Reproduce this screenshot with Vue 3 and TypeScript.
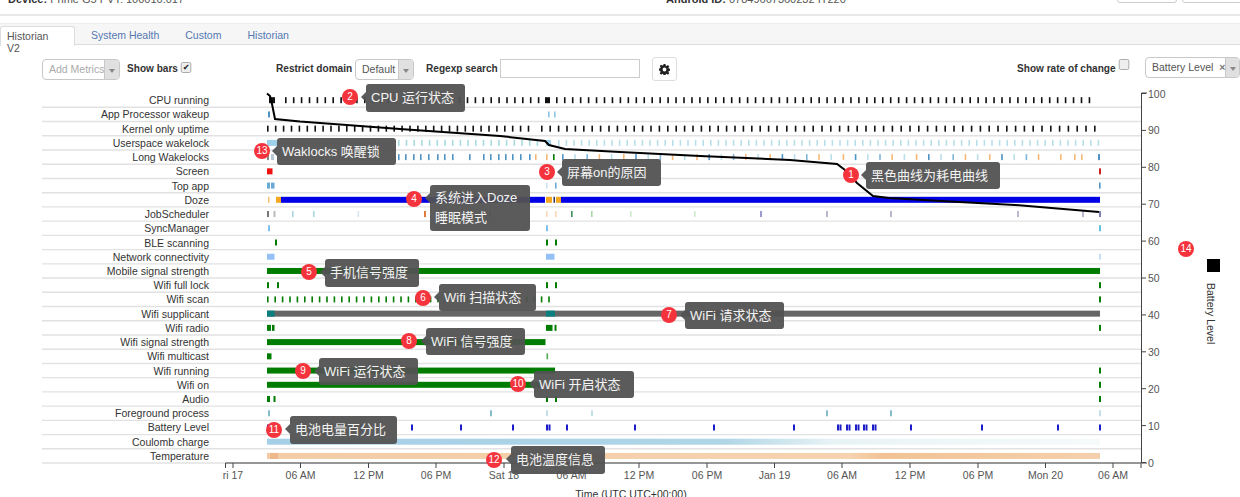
<script setup lang="ts">
interface Bar {
  x: number;
  w: number;
  c: string;
}

interface Row {
  label: string;
  h: number;
  bars: Bar[];
}

interface Note {
  n: number;
  cx: number;
  cy: number;
  x: number;
  y: number;
  w: number;
  h: number;
  lines: string[];
}

const BLACK = "#111111";
const GREEN = "#007d00";
const BLUE = "#0000e6";
const NAVY = "#1c1cc8";
const LBLUE = "#b9dfea";
const MBLUE = "#4f93c4";
const ORANGE = "#f5b878";

// chart coordinates are page coordinates, svg starts at y=84
const CHART_TOP = 84;
const ROW_TOP = 100.2;
const ROW_STEP = 14.23;

function bar(x: number, x2: number, c: string): Bar {
  return { x, w: x2 - x, c };
}

function at(xs: number[], c: string, w = 1.6): Bar[] {
  return xs.map((x) => ({ x, w, c }));
}

function every(from: number, to: number, step: number, c: string, w = 1.6): Bar[] {
  const out: Bar[] = [];
  for (let x = from; x <= to; x += step) out.push({ x, w, c });
  return out;
}

const longColors = [MBLUE, LBLUE, "#7fb6d8", ORANGE, LBLUE, ORANGE];
const longWake: Bar[] = [
  bar(267, 269, "#888888"),
  bar(271, 274, "#b9c9d6"),
  ...at([398, 405, 413, 420, 428, 437, 444, 452, 469, 483, 490, 498, 505, 512, 520, 529], MBLUE),
  ...at([535, 546], ORANGE),
  ...at([553], GREEN),
  ...every(562, 1050, 12.2, "").map((b, i) => ({ ...b, c: longColors[i % 6] })),
  ...at([1060, 1074, 1081], ORANGE),
  bar(1098, 1100, MBLUE),
];

const rows: Row[] = [
  {
    label: "CPU running",
    h: 6,
    bars: [bar(269, 275, BLACK), ...every(285, 540, 7.9, BLACK), bar(545, 550, BLACK), ...every(556, 1094, 7.95, BLACK)],
  },
  {
    label: "App Processor wakeup",
    h: 6,
    bars: at([268], MBLUE, 2).concat(at([548, 554], "#8cc4e4")),
  },
  {
    label: "Kernel only uptime",
    h: 6,
    bars: [...every(267, 530, 7.9, BLACK), ...every(541, 780, 8.4, BLACK), ...every(786, 1094, 8.8, BLACK)],
  },
  {
    label: "Userspace wakelock",
    h: 6,
    bars: [bar(267, 277, "#9fd0ea"), ...every(398, 540, 7.7, "#a6dbe0"), bar(546, 551, "#9fd0ea"), ...every(558, 1098, 7.6, LBLUE)],
  },
  { label: "Long Wakelocks", h: 6, bars: longWake },
  { label: "Screen", h: 6, bars: [bar(267, 272.5, "#ee1111"), bar(1099, 1101, "#cc2222")] },
  {
    label: "Top app",
    h: 6,
    bars: [bar(267, 270, "#6aa9d6"), bar(271, 274.5, "#6aa9d6"), ...at([546], "#cfe2f0"), ...at([555], "#6aa9d6"), ...at([1099], MBLUE)],
  },
  {
    label: "Doze",
    h: 6,
    bars: [
      bar(268, 269.5, "#f5c070"),
      bar(276, 281, "#f5a623"),
      bar(281, 545, BLUE),
      bar(546, 552, "#f5a623"),
      bar(553.5, 555, "#333366"),
      bar(556, 561, "#f5a623"),
      bar(561, 1100, BLUE),
    ],
  },
  {
    label: "JobScheduler",
    h: 6,
    bars: [
      ...at([267], "#777777", 2),
      ...at([273.5], "#bbbbbb", 2),
      ...at([292, 313], "#a9d4e2"),
      ...at([357.5], "#d9e6ee"),
      ...at([424], "#e07a3a", 2),
      ...at([489], "#a08a70"),
      ...at([546, 555], "#f8d8b8"),
      ...at([571], "#3b8f5b"),
      ...at([591], "#a8d8a8"),
      ...at([630, 694], "#cdeacd"),
      ...at([760], "#9a9ad0", 2),
      ...at([826, 890, 1017, 1082], "#b8b8d0", 2),
      ...at([1099], "#8080b0", 2),
    ],
  },
  { label: "SyncManager", h: 6, bars: at([268, 546], "#7cc0ee", 2).concat(at([1099], "#5cc0e0", 2)) },
  { label: "BLE scanning", h: 6, bars: at([275, 546, 555], GREEN, 2) },
  {
    label: "Network connectivity",
    h: 6,
    bars: [bar(267, 274.5, "#94c0f5"), bar(546, 554.5, "#94c0f5"), bar(1099, 1101, "#c8e0f5")],
  },
  { label: "Mobile signal strength", h: 6, bars: [bar(267, 1100, GREEN)] },
  { label: "Wifi full lock", h: 6, bars: at([267, 277, 546, 555, 1099], GREEN, 2) },
  { label: "Wifi scan", h: 6, bars: [...every(267, 555, 7.4, GREEN), ...at([1099], GREEN, 2)] },
  {
    label: "Wifi supplicant",
    h: 6,
    bars: [bar(267, 1100, "#666666"), bar(267, 274.5, "#0b7f80"), bar(546, 555, "#0b7f80")],
  },
  {
    label: "Wifi radio",
    h: 6,
    bars: [bar(267, 271, GREEN), bar(272, 274.5, GREEN), bar(546, 552.5, GREEN), ...at([554.5, 1099], GREEN, 2)],
  },
  { label: "Wifi signal strength", h: 6, bars: [bar(267, 545.5, GREEN)] },
  { label: "Wifi multicast", h: 6, bars: [bar(267, 271.5, GREEN), ...at([546.5], "#55aa55")] },
  { label: "Wifi running", h: 6, bars: [bar(267, 555, GREEN), ...at([1099], GREEN, 2)] },
  { label: "Wifi on", h: 6, bars: [bar(267, 540, GREEN), ...at([1099], GREEN, 2)] },
  { label: "Audio", h: 6, bars: [bar(267, 270, GREEN), ...at([273.5, 546, 555, 1099], GREEN, 2)] },
  { label: "Foreground process", h: 6, bars: at([268, 490, 826, 890], "#88bccc", 2).concat(at([546, 591, 1099], "#c4dfe6", 2)) },
  {
    label: "Battery Level",
    h: 6,
    bars: at(
      [267, 360, 411, 460, 512, 546, 548.5, 566, 634, 713, 793, 837, 839.5, 846, 848.5, 855, 857.5, 863, 865.5, 872, 874.5, 910, 981, 1057, 1099],
      NAVY,
      2,
    ),
  },
  { label: "Coulomb charge", h: 6, bars: [] },
  { label: "Temperature", h: 6, bars: [] },
];

const rowY = (i: number) => ROW_TOP + i * ROW_STEP;

const xTicks = [
  { x: 233, t: "ri 17" },
  { x: 300.5, t: "06 AM" },
  { x: 368.5, t: "12 PM" },
  { x: 436, t: "06 PM" },
  { x: 504, t: "Sat 18" },
  { x: 571.5, t: "06 AM" },
  { x: 639, t: "12 PM" },
  { x: 707, t: "06 PM" },
  { x: 774.5, t: "Jan 19" },
  { x: 842, t: "06 AM" },
  { x: 910, t: "12 PM" },
  { x: 978, t: "06 PM" },
  { x: 1045.5, t: "Mon 20" },
  { x: 1113, t: "06 AM" },
];

const yTicks = [100, 90, 80, 70, 60, 50, 40, 30, 20, 10, 0].map((v) => ({
  v,
  y: 462.5 - v * 3.69,
}));

const batteryLine =
  "267,93.5 270,96 272,104 275,119 300,121.5 400,129 500,136 545,141 549,145 565,149 620,152 700,156 790,160 837,164 845,170 857,183 873,196 889,198 950,201.5 1015,205 1099,212";

const notes: Note[] = [
  { n: 2, cx: 350, cy: 97, x: 366, y: 84, w: 99, h: 28, lines: ["CPU 运行状态"] },
  { n: 13, cx: 262, cy: 151, x: 277, y: 138, w: 119, h: 27, lines: ["Waklocks 唤醒锁"] },
  { n: 3, cx: 547, cy: 172, x: 562, y: 159, w: 99, h: 27, lines: ["屏幕on的原因"] },
  { n: 1, cx: 851, cy: 175, x: 866, y: 162, w: 134, h: 27, lines: ["黑色曲线为耗电曲线"] },
  { n: 4, cx: 414, cy: 199, x: 430, y: 185, w: 100, h: 46, lines: ["系统进入Doze", "睡眠模式"] },
  { n: 5, cx: 309, cy: 272, x: 325, y: 259, w: 94, h: 28, lines: ["手机信号强度"] },
  { n: 6, cx: 423, cy: 298, x: 439, y: 284, w: 97, h: 27, lines: ["Wifi 扫描状态"] },
  { n: 7, cx: 669, cy: 315, x: 685, y: 302, w: 99, h: 27, lines: ["WiFi 请求状态"] },
  { n: 8, cx: 409, cy: 341, x: 426, y: 328, w: 99, h: 27, lines: ["WiFi 信号强度"] },
  { n: 9, cx: 303, cy: 371, x: 319, y: 358, w: 99, h: 27, lines: ["WiFi 运行状态"] },
  { n: 10, cx: 518, cy: 384, x: 534, y: 371, w: 100, h: 27, lines: ["WiFi 开启状态"] },
  { n: 11, cx: 274, cy: 430, x: 290, y: 416, w: 107, h: 28, lines: ["电池电量百分比"] },
  { n: 12, cx: 494, cy: 460, x: 511, y: 446, w: 94, h: 28, lines: ["电池温度信息"] },
];

const tabs = ["Historian V2", "System Health", "Custom", "Historian"];
</script>

<template>
  <div class="page">
    <div class="device">
      <span class="device-item"><b>Device:</b> Prime G5 PVT: 100010.017</span>
      <span class="device-item android"><b>Android ID:</b> 07849667360232 IT220</span>
      <span class="top-btns"><i></i><i></i></span>
    </div>

    <ul class="tabs">
      <li v-for="(t, i) in tabs" :key="t" :class="{ active: i === 0 }">{{ t }}</li>
    </ul>

    <div class="controls">
      <div class="select disabled metrics">
        <span class="select-text">Add Metrics</span>
        <span class="select-arrow"></span>
      </div>
      <label class="check bars">Show bars <span class="box checked">✔</span></label>
      <label class="check domain">Restrict domain</label>
      <div class="select default">
        <span class="select-text">Default</span>
        <span class="select-arrow"></span>
      </div>
      <label class="check regexp">Regexp search</label>
      <input class="search" type="text" />
      <button class="gear" type="button">
        <svg width="11" height="11" viewBox="0 0 16 16">
          <path
            fill="#222"
            fill-rule="evenodd"
            d="M6.6 0h2.8l.4 2.2 1.3.6 1.9-1.3 2 2-1.3 1.9.6 1.3 2.2.4v2.8l-2.2.4-.6 1.3 1.3 1.9-2 2-1.9-1.3-1.3.6-.4 2.2H6.6l-.4-2.2-1.3-.6-1.9 1.3-2-2 1.3-1.9-.6-1.3L-.5 9.4V6.6l2.2-.4.6-1.3-1.3-1.9 2-2 1.9 1.3 1.3-.6zM8 5.2a2.8 2.8 0 1 0 0 5.6 2.8 2.8 0 0 0 0-5.6z"
          />
        </svg>
      </button>
      <label class="check rate">Show rate of change <span class="box"></span></label>
      <div class="select level">
        <span class="select-text">Battery Level <em>×</em></span>
        <span class="select-arrow"></span>
      </div>
    </div>

    <div class="chart">
      <svg class="plot" width="1240" height="413" :viewBox="`0 ${CHART_TOP} 1240 413`">
        <defs>
          <linearGradient id="coulomb" x1="0" x2="1" y1="0" y2="0">
            <stop offset="0" stop-color="#a5cfe8" />
            <stop offset="0.55" stop-color="#b0d6e6" />
            <stop offset="0.68" stop-color="#e8f3f6" />
            <stop offset="1" stop-color="#f6fafb" />
          </linearGradient>
          <linearGradient id="temp" x1="0" x2="1" y1="0" y2="0">
            <stop offset="0" stop-color="#f3cca6" />
            <stop offset="0.7" stop-color="#f6d2ae" />
            <stop offset="0.74" stop-color="#f2c294" />
            <stop offset="1" stop-color="#f5d0ac" />
          </linearGradient>
        </defs>

        <g v-for="(row, i) in rows" :key="row.label">
          <text class="row-label" x="209" :y="rowY(i) + 4" text-anchor="end">{{ row.label }}</text>
          <line class="grid" x1="42" x2="1141" :y1="rowY(i) + 7.1" :y2="rowY(i) + 7.1" />
          <rect
            v-for="(b, j) in row.bars"
            :key="j"
            :x="b.x"
            :y="rowY(i) - row.h / 2"
            :width="b.w"
            :height="row.h"
            :fill="b.c"
          />
        </g>

        <rect x="267" :y="rowY(24) - 3" width="833" height="6" fill="url(#coulomb)" />
        <rect x="267" :y="rowY(25) - 3" width="833" height="6" fill="url(#temp)" />
        <rect x="270" :y="rowY(25) - 3" width="8" height="6" fill="#eeb78c" />

        <polyline class="battery" :points="batteryLine" />

        <!-- x axis -->
        <path class="axis" d="M225.5 468V463H1141V468" />
        <g v-for="t in xTicks" :key="t.x + t.t">
          <line class="axis" :x1="t.x" :x2="t.x" y1="463" y2="468" />
          <text class="tick-label" :x="t.x" y="479" text-anchor="middle">{{ t.t }}</text>
        </g>
        <text class="tick-label axis-title" x="631" y="498" text-anchor="middle">Time (UTC UTC+00:00)</text>

        <!-- y axis -->
        <path class="axis" d="M1147 93H1141.5V463H1147" />
        <g v-for="t in yTicks" :key="t.v">
          <line class="axis" x1="1141" x2="1146" :y1="t.y" :y2="t.y" />
          <text class="tick-label" x="1148" :y="t.y + 4">{{ t.v }}</text>
        </g>

        <!-- legend -->
        <rect x="1207" y="259" width="13" height="13" fill="#000" />
        <text class="tick-label legend" transform="translate(1207 283) rotate(90)">Battery Level</text>
      </svg>

      <template v-for="note in notes" :key="note.n">
        <div
          class="note"
          :style="{ left: note.x + 'px', top: note.y - CHART_TOP + 'px', width: note.w + 'px', height: note.h + 'px' }"
        >
          <span v-for="line in note.lines" :key="line">{{ line }}</span>
        </div>
        <span class="dot" :style="{ left: note.cx - 8 + 'px', top: note.cy - 8 - CHART_TOP + 'px' }">{{ note.n }}</span>
      </template>
      <span class="dot" :style="{ left: '1178px', top: 241 - CHART_TOP + 'px' }">14</span>
    </div>
  </div>
</template>

<style scoped>
.page {
  width: 1240px;
  height: 497px;
  overflow: hidden;
  display: flex;
  flex-direction: column;
  background: #fff;
  font-family: "Liberation Sans", "Noto Sans CJK SC", sans-serif;
  font-size: 11px;
  color: #333;
}

.device {
  flex: none;
  height: 15px;
  position: relative;
  overflow: hidden;
  border-bottom: 2px solid #e8e8e8;
  box-sizing: border-box;
  height: 16px;
}

.device-item {
  position: absolute;
  top: -7px;
  left: 8px;
  font-size: 11px;
  color: #555;
  white-space: nowrap;
}

.device-item b {
  color: #333;
}

.android {
  left: 666px;
}

.top-btns i {
  position: absolute;
  top: -8px;
  width: 58px;
  height: 9px;
  border: 1px solid #ccc;
  border-radius: 3px;
}

.top-btns i:first-child {
  left: 1117px;
}

.top-btns i:last-child {
  left: 1182px;
}

.tabs {
  flex: none;
  display: flex;
  list-style: none;
  margin: 7px 0 0;
  padding: 2px 0 0;
  height: 22px;
  box-sizing: border-box;
  background: #f6f6f6;
  border-top: 1px solid #ececec;
  border-bottom: 1px solid #ddd;
  font-size: 10.5px;
}

.tabs li {
  padding: 3px 10px 0;
  width: auto;
  color: #5478b0;
  margin-right: 6px;
}

.tabs li.active {
  padding-left: 6px;
  width: 75px;
  box-sizing: border-box;
  margin: 0 6px 0 0;
  height: 20px;
  background: #fff;
  border: 1px solid #ddd;
  border-bottom: 0;
  border-radius: 3px 3px 0 0;
  color: #555;
}

.controls {
  flex: none;
  height: 39px;
  display: flex;
  align-items: flex-start;
  padding: 14px 0 0 42px;
  box-sizing: border-box;
  font-size: 10.5px;
}

.select {
  display: flex;
  height: 21px;
  box-sizing: border-box;
  border: 1px solid #c8c8c8;
  border-radius: 4px;
  background: #fff;
  overflow: hidden;
}

.select-text {
  flex: 1;
  line-height: 19px;
  padding-left: 6px;
  color: #555;
  white-space: nowrap;
}

.select-text em {
  font-style: normal;
  font-weight: bold;
  color: #777;
  margin-left: 3px;
}

.select-arrow {
  width: 14px;
  flex: none;
  position: relative;
  background: #e0e0e0;
  border-left: 1px solid #c8c8c8;
}

.select-arrow::after {
  content: "";
  position: absolute;
  left: 4px;
  top: 9px;
  border: 3px solid transparent;
  border-top: 4px solid #888;
}

.disabled .select-text {
  color: #aaa;
}

.metrics {
  width: 85px;
}

.default {
  width: 64px;
}

.level {
  width: 104px;
  margin-left: 14px;
  margin-top: -2px;
}

.check {
  font-weight: bold;
  color: #333;
  white-space: nowrap;
  line-height: 18px;
  transform: scaleX(0.96);
  transform-origin: left;
}

.bars {
  margin-left: 7px;
}

.domain {
  margin-left: 82px;
  width: 82px;
}

.regexp {
  margin-left: 12px;
  width: 77px;
}

.rate {
  margin-left: 340px;
  width: 114px;
}

.box {
  display: inline-block;
  width: 9px;
  height: 9px;
  border: 1px solid #aaa;
  border-radius: 2px;
  background: #eee;
  font-size: 8px;
  line-height: 9px;
  text-align: center;
  vertical-align: 2px;
}

.checked {
  color: #333;
}

.search {
  width: 140px;
  height: 19px;
  padding: 0;
  box-sizing: border-box;
  border: 1px solid #ccc;
  outline: none;
}

.gear {
  width: 27px;
  height: 24px;
  margin: -2px 0 0 12px;
  padding: 0;
  display: flex;
  align-items: center;
  justify-content: center;
  background: #fff;
  border: 1px solid #ddd;
  border-radius: 3px;
}

.chart {
  position: relative;
  flex: none;
  height: 413px;
}

.plot {
  display: block;
}

.grid {
  stroke: #e2e2e2;
  stroke-width: 1.4;
}

.row-label {
  font-size: 10.5px;
  fill: #333;
}

.battery {
  fill: none;
  stroke: #000;
  stroke-width: 2;
}

.axis {
  fill: none;
  stroke: #444;
  stroke-width: 1;
}

.tick-label {
  font-size: 10.5px;
  fill: #555;
}

.axis-title,
.legend {
  fill: #333;
}

.note {
  position: absolute;
  box-sizing: border-box;
  padding: 0 5px;
  display: flex;
  flex-direction: column;
  justify-content: center;
  gap: 4px;
  background: rgba(82, 82, 82, 0.95);
  border-radius: 3px;
  color: #f4f4f4;
  font-size: 13px;
  line-height: 16px;
  white-space: nowrap;
}

.note::before {
  content: "";
  position: absolute;
  left: -5px;
  top: 8px;
  border: 5px solid transparent;
  border-left: 0;
  border-right-color: rgba(82, 82, 82, 0.95);
}

.dot {
  position: absolute;
  width: 16px;
  height: 16px;
  border-radius: 50%;
  background: #f4333c;
  color: #fff;
  font-size: 10px;
  line-height: 16px;
  text-align: center;
}
</style>
